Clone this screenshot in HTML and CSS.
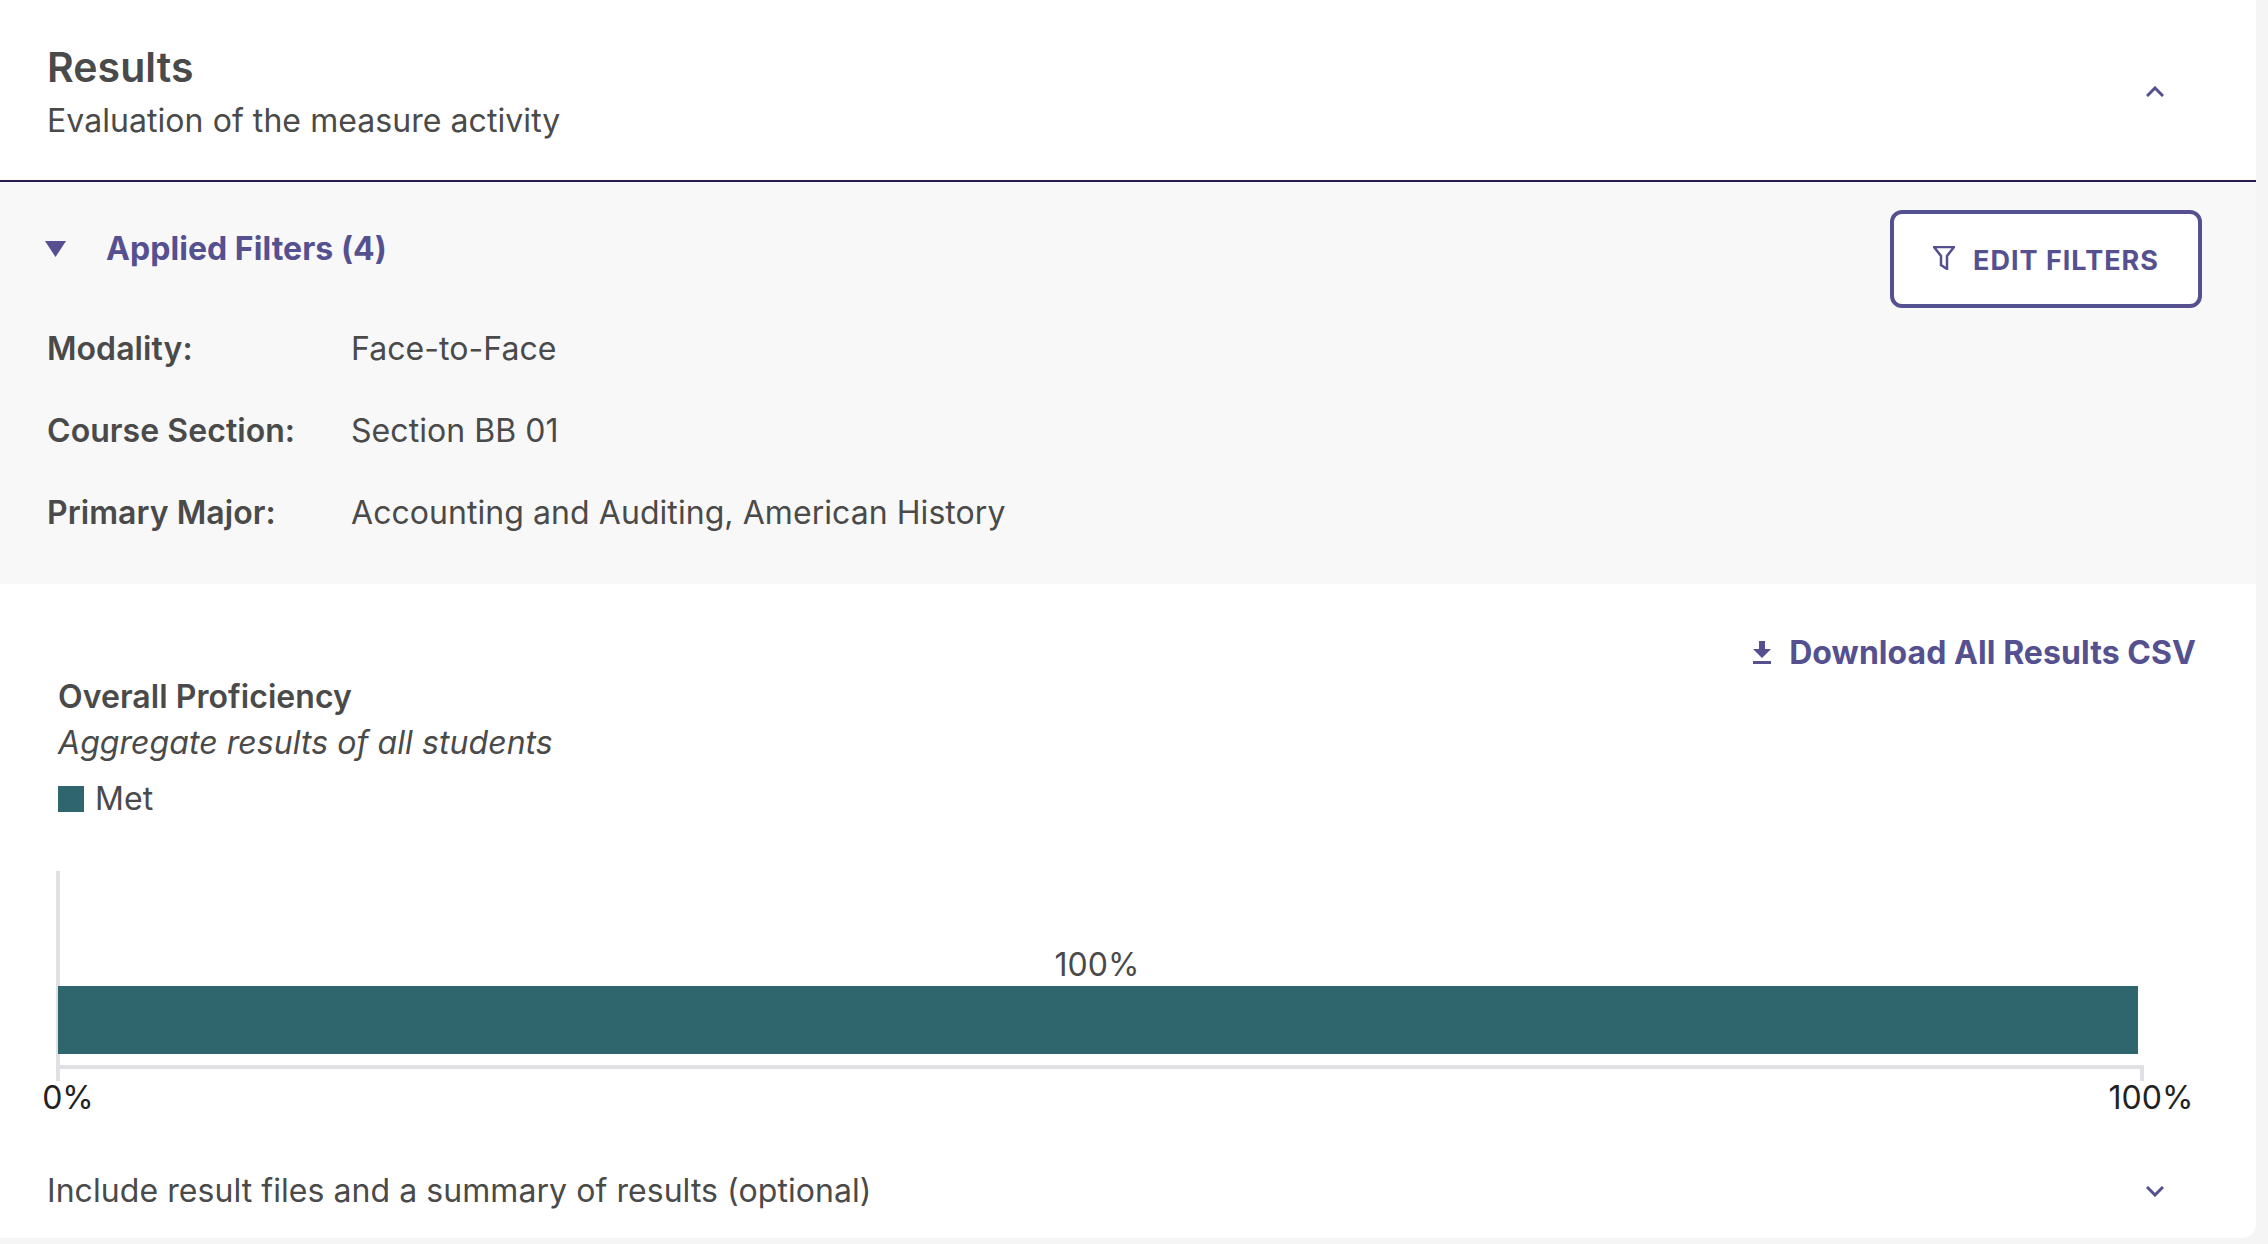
FILE: index.html
```html
<!DOCTYPE html>
<html lang="en">
<head>
  <meta charset="UTF-8">
  <title>Results</title>
  <link rel="stylesheet" href="styles.css">
</head>
<body>
  <div class="card">
    <div class="card-header">
      <div>
        <h2 class="card-title">Results</h2>
        <div class="card-subtitle">Evaluation of the measure activity</div>
      </div>
      <svg class="chevron" viewBox="0 0 18 11"><path d="M1 10 9 2l8 8"/></svg>
    </div>

    <div class="filters">
      <div class="filters-main">
        <div class="filters-toggle">
          <svg class="caret" viewBox="0 0 21 16"><path d="M0 0h21L10.5 16z"/></svg>
          <span>Applied Filters (4)</span>
        </div>
        <div class="filter-row"><span class="filter-label">Modality:</span><span>Face-to-Face</span></div>
        <div class="filter-row"><span class="filter-label">Course Section:</span><span>Section BB 01</span></div>
        <div class="filter-row"><span class="filter-label">Primary Major:</span><span>Accounting and Auditing, American History</span></div>
      </div>
      <button class="edit-btn">
        <svg class="funnel" viewBox="0 0 22 24"><path d="M1 1h20l-7 9v13l-6-4v-9z"/></svg>
        EDIT FILTERS
      </button>
    </div>

    <div class="results">
      <div class="download-row">
        <a class="download">
          <svg class="download-icon" viewBox="0 0 18 24"><path d="M6 0h6v8h6l-9 9-9-9h6zM0 20h18v3H0z"/></svg>
          Download All Results CSV
        </a>
      </div>
      <div class="chart-title">Overall Proficiency</div>
      <div class="chart-desc">Aggregate results of all students</div>
      <div class="legend"><span class="legend-swatch"></span>Met</div>

      <svg class="chart" width="2268" height="252" viewBox="0 0 2268 252">
        <path class="axis" d="M58 0V210M58 196H2142V210"/>
        <rect class="bar" x="58" y="115" width="2080" height="68"/>
        <text class="bar-label" x="1097" y="105" text-anchor="middle">100%</text>
        <text class="tick" x="68" y="238" text-anchor="middle">0%</text>
        <text class="tick" x="2151" y="238" text-anchor="middle">100%</text>
      </svg>

      <div class="include-row">
        <span>Include result files and a summary of results (optional)</span>
        <svg class="chevron" viewBox="0 0 18 11"><path d="M1 1l8 8 8-8"/></svg>
      </div>
    </div>
  </div>
</body>
</html>
```

FILE: styles.css
```css
body {
  margin: 0;
  background: #f5f5f6;
  font-family: Inter, sans-serif;
  color: #4a4a4a;
  font-size: 32px;
  letter-spacing: 0.06px;
  height: 1244px;
  overflow: hidden;
}

.card {
  width: 2256px;
  height: 1238px;
  background: #fff;
  border-bottom-right-radius: 14px;
  display: flex;
  flex-direction: column;
}

/* Header */
.card-header {
  box-sizing: border-box;
  padding: 44px 92px 0 47px;
  display: flex;
  justify-content: space-between;
  border-bottom: 2px solid #2b1b4d;
  flex: none;
  height: 182px;
}

.card-title {
  margin: 0;
  font-size: 41px;
  font-weight: 600;
  line-height: 46px;
}

.card-subtitle {
  line-height: 40px;
  margin-top: 11px;
}

.chevron {
  width: 18px;
  height: 11px;
  fill: none;
  stroke: #55508f;
  stroke-width: 3;
  margin-top: 42px;
}

/* Filters */
.filters {
  flex: none;
  height: 402px;
  box-sizing: border-box;
  background: #f8f8f8;
  padding: 28px 54px 0 47px;
  display: flex;
  justify-content: space-between;
  align-items: flex-start;
}

.filters-toggle {
  display: flex;
  align-items: center;
  color: #55508f;
  font-weight: 700;
  font-size: 32px;
  line-height: 40px;
  margin-top: 19px;
  margin-bottom: 60px;
}

.caret {
  width: 21px;
  height: 16px;
  fill: #55508f;
  margin-left: -2px;
  margin-right: 40px;
}

.filter-row {
  display: flex;
  line-height: 40px;
  margin-bottom: 42px;
}

.filter-label {
  width: 304px;
  font-weight: 600;
}

.edit-btn {
  width: 312px;
  height: 98px;
  background: #fff;
  border: 4px solid #55508f;
  border-radius: 12px;
  color: #55508f;
  font-family: Inter, sans-serif;
  font-size: 27px;
  font-weight: 700;
  letter-spacing: 1px;
  display: flex;
  align-items: center;
  justify-content: center;
  gap: 18px;
  padding: 2px 0 0;
}

.funnel {
  width: 22px;
  height: 24px;
  fill: none;
  stroke: #55508f;
  stroke-width: 2.5;
  margin-top: -4px;
}

/* Results */
.results {
  flex: 1;
  display: flex;
  flex-direction: column;
}

.download-row {
  display: flex;
  justify-content: flex-end;
  padding: 49px 60px 0 0;
}

.download {
  display: flex;
  align-items: center;
  gap: 18px;
  color: #55508f;
  font-size: 32px;
  font-weight: 700;
  line-height: 40px;
}

.download-icon {
  width: 18px;
  height: 24px;
  fill: #55508f;
}

.chart-title {
  padding-left: 58px;
  font-weight: 600;
  line-height: 40px;
  margin-top: 4px;
}

.chart-desc {
  padding-left: 58px;
  font-style: italic;
  line-height: 40px;
  margin-top: 6px;
}

.legend {
  padding-left: 58px;
  display: flex;
  align-items: center;
  gap: 11px;
  line-height: 40px;
  margin-top: 16px;
}

.legend-swatch {
  width: 26px;
  height: 26px;
  background: #2f666e;
}

.chart {
  display: block;
  margin-top: 52px;
}

.axis {
  fill: none;
  stroke: #e0e0e4;
  stroke-width: 4;
}

.bar {
  fill: #2f666e;
}

.bar-label {
  fill: #4a4a4a;
  font-size: 32px;
}

.tick {
  fill: #222;
  font-size: 32px;
}

.include-row {
  display: flex;
  justify-content: space-between;
  align-items: center;
  padding: 0 92px 0 47px;
  line-height: 40px;
  margin-top: 48px;
}

.include-row .chevron {
  margin-top: 0;
}
```
